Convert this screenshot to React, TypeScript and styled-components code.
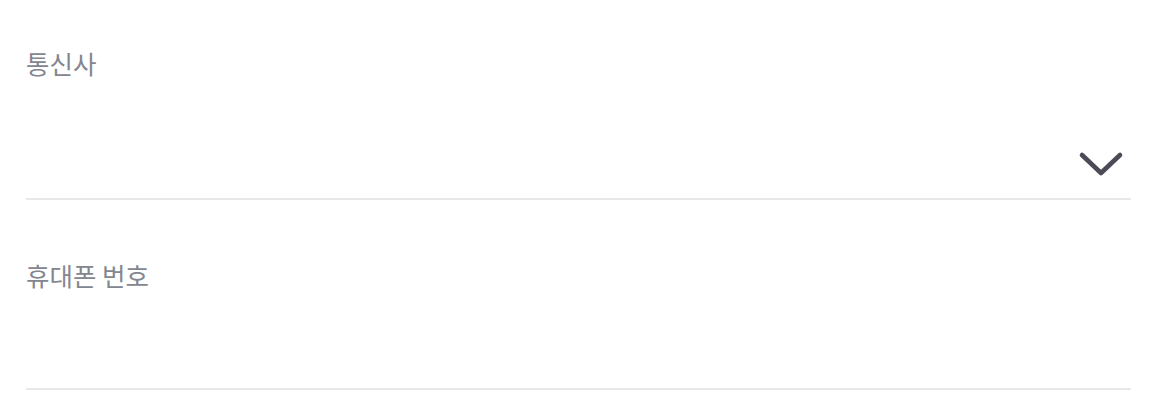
import React from 'react';
import styled, { createGlobalStyle } from 'styled-components';

const GlobalStyle = createGlobalStyle`
  html, body {
    margin: 0;
    padding: 0;
    background: #ffffff;
  }
  body {
    font-family: "Noto Sans CJK KR", "Noto Sans", sans-serif;
  }
`;

const Form = styled.div`
  width: 1164px;
  padding: 0 33px 0 26px;
  box-sizing: border-box;
  display: flex;
  flex-direction: column;
  gap: 12px;
`;

const Field = styled.div`
  padding-top: 46px;
  border-bottom: 2px solid #e8e8e8;
`;

const Label = styled.label`
  display: block;
  font-size: 25.5px;
  line-height: 34px;
  color: #83868f;
`;

const Control = styled.div<{ $height: number }>`
  height: ${(p) => p.$height}px;
  display: flex;
  align-items: flex-end;
  justify-content: flex-end;
  padding: 0 7px 21px 0;
  box-sizing: border-box;
`;

const TextInput = styled.input`
  flex: 1;
  border: none;
  outline: none;
  background: transparent;
  font-family: inherit;
  font-size: 23px;
  color: #333;
`;

const Chevron = () => (
  <svg width="46" height="26" viewBox="0 0 46 26" fill="none">
    <path
      d="M4 4 L23 22 L42 4"
      stroke="#4b4b57"
      strokeWidth="4.6"
      strokeLinecap="round"
      strokeLinejoin="round"
    />
  </svg>
);

export default function App() {
  return (
    <>
      <GlobalStyle />
      <Form>
        <Field>
          <Label>통신사</Label>
          <Control $height={118}>
            <Chevron />
          </Control>
        </Field>
        <Field>
          <Label>휴대폰 번호</Label>
          <Control $height={96}>
            <TextInput type="tel" />
          </Control>
        </Field>
      </Form>
    </>
  );
}
